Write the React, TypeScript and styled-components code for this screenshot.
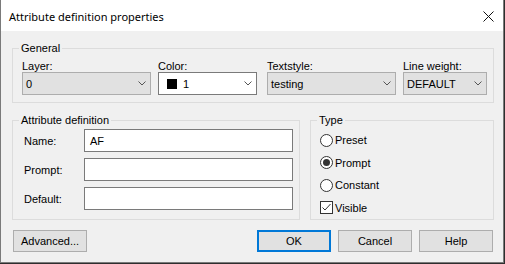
import styled, { createGlobalStyle } from "styled-components";

const GlobalStyle = createGlobalStyle`
  html, body {
    margin: 0;
    padding: 0;
    background: #2e2e2e;
  }
  * {
    box-sizing: border-box;
  }
`;

const Window = styled.div`
  width: 504px;
  height: 263px;
  background: #f0f0f0;
  border: 1px solid #7a7a7a;
  border-top: none;
  display: flex;
  flex-direction: column;
  font-family: "Liberation Sans", Arial, sans-serif;
  font-size: 11px;
  color: #000;
`;

const TitleBar = styled.div`
  height: 31px;
  background: #fff;
  display: flex;
  align-items: center;
  justify-content: space-between;
  padding: 1px 9px 0 8px;
`;

const Title = styled.div`
  font-family: "Noto Sans", "Open Sans", sans-serif;
  font-size: 11px;
  color: #000;
`;

const CloseButton = styled.div`
  width: 11px;
  height: 11px;
  display: flex;
`;

const Body = styled.div`
  flex: 1;
  display: flex;
  flex-direction: column;
  padding: 11px 9px 0 11px;
`;

const Group = styled.fieldset<{ $width: number; $top?: number; $bottom?: number }>`
  margin: 0;
  width: ${(p) => p.$width}px;
  border: 1px solid #dcdcdc;
  padding: ${(p) => p.$top ?? 2}px 6px ${(p) => p.$bottom ?? 9}px 9px;
  min-width: 0;
`;

const Legend = styled.legend`
  padding: 0 2px;
  margin-left: -3px;
  line-height: 13px;
`;

const ComboGrid = styled.div`
  display: grid;
  grid-template-columns: 129px 102px 129px 84px;
  column-gap: 7px;
  & > :nth-child(2) {
    margin-right: 3px;
  }
`;

const Field = styled.div`
  display: flex;
  flex-direction: column;
`;

const FieldLabel = styled.div`
  line-height: 12px;
  height: 12px;
`;

const Combo = styled.div<{ $white?: boolean }>`
  height: 23px;
  background: ${(p) => (p.$white ? "#fff" : "#e1e1e1")};
  border: 1px solid ${(p) => (p.$white ? "#7a7a7a" : "#adadad")};
  display: flex;
  align-items: center;
  padding: 0 4px 0 3px;
  gap: 6px;
`;

const ComboText = styled.span`
  flex: 1;
`;

const Swatch = styled.span`
  width: 10px;
  height: 10px;
  background: #000;
  margin-left: 5px;
`;

const Chevron = () => (
  <svg width="8" height="5" viewBox="0 0 8 5">
    <polyline points="0.5,0.5 4,4 7.5,0.5" fill="none" stroke="#555" strokeWidth="1" />
  </svg>
);

const Row = styled.div`
  display: flex;
  gap: 10px;
  margin-top: 11px;
`;

const FormGrid = styled.div`
  display: grid;
  grid-template-columns: 60px 1fr;
  row-gap: 6px;
  align-items: center;
  padding-left: 2px;
`;

const TextInput = styled.div`
  height: 23px;
  background: #fff;
  border: 1px solid #7a7a7a;
  display: flex;
  align-items: center;
  padding-left: 5px;
`;

const OptionList = styled.div`
  display: flex;
  flex-direction: column;
`;

const Option = styled.div`
  height: 22.5px;
  display: flex;
  align-items: center;
  gap: 2px;
`;

const Radio = styled.span<{ $checked?: boolean }>`
  width: 13px;
  height: 13px;
  border-radius: 50%;
  border: 1px solid #333;
  background: #fff;
  display: flex;
  align-items: center;
  justify-content: center;
  &::after {
    content: "";
    width: 7px;
    height: 7px;
    border-radius: 50%;
    background: ${(p) => (p.$checked ? "#333" : "transparent")};
  }
`;

const CheckBox = styled.span`
  width: 13px;
  height: 13px;
  border: 1px solid #333;
  background: #fff;
  display: flex;
`;

const ButtonRow = styled.div`
  display: flex;
  gap: 7px;
  margin-top: 10px;
  padding-left: 1px;
  padding-right: 1px;
  & > :first-child {
    margin-right: auto;
  }
`;

const Button = styled.div<{ $default?: boolean }>`
  width: 74px;
  height: 22px;
  background: #e1e1e1;
  border: ${(p) => (p.$default ? "2px solid #0078d7" : "1px solid #adadad")};
  display: flex;
  align-items: center;
  justify-content: center;
`;

export default function App() {
  return (
    <>
      <GlobalStyle />
      <Window>
        <TitleBar>
          <Title>Attribute definition properties</Title>
          <CloseButton>
            <svg width="11" height="11" viewBox="0 0 11 11">
              <path d="M0.5 0.5 L10.5 10.5 M10.5 0.5 L0.5 10.5" stroke="#111" strokeWidth="1" />
            </svg>
          </CloseButton>
        </TitleBar>
        <Body>
          <Group $width={482} $top={5} $bottom={7}>
            <Legend>General</Legend>
            <ComboGrid>
              <Field>
                <FieldLabel>Layer:</FieldLabel>
                <Combo>
                  <ComboText>0</ComboText>
                  <Chevron />
                </Combo>
              </Field>
              <Field>
                <FieldLabel>Color:</FieldLabel>
                <Combo $white>
                  <Swatch />
                  <ComboText>1</ComboText>
                  <Chevron />
                </Combo>
              </Field>
              <Field>
                <FieldLabel>Textstyle:</FieldLabel>
                <Combo>
                  <ComboText>testing</ComboText>
                  <Chevron />
                </Combo>
              </Field>
              <Field>
                <FieldLabel>Line weight:</FieldLabel>
                <Combo>
                  <ComboText>DEFAULT</ComboText>
                  <Chevron />
                </Combo>
              </Field>
            </ComboGrid>
          </Group>
          <Row>
            <Group $width={288}>
              <Legend>Attribute definition</Legend>
              <FormGrid>
                <span>Name:</span>
                <TextInput>AF</TextInput>
                <span>Prompt:</span>
                <TextInput />
                <span>Default:</span>
                <TextInput />
              </FormGrid>
            </Group>
            <Group $width={184} $bottom={0}>
              <Legend>Type</Legend>
              <OptionList>
                <Option>
                  <Radio />
                  Preset
                </Option>
                <Option>
                  <Radio $checked />
                  Prompt
                </Option>
                <Option>
                  <Radio />
                  Constant
                </Option>
                <Option>
                  <CheckBox>
                    <svg width="11" height="11" viewBox="0 0 11 11">
                      <polyline points="1.5,5.5 4,8 9.5,2" fill="none" stroke="#333" strokeWidth="1" />
                    </svg>
                  </CheckBox>
                  Visible
                </Option>
              </OptionList>
            </Group>
          </Row>
          <ButtonRow>
            <Button>Advanced...</Button>
            <Button $default>OK</Button>
            <Button>Cancel</Button>
            <Button>Help</Button>
          </ButtonRow>
        </Body>
      </Window>
    </>
  );
}
